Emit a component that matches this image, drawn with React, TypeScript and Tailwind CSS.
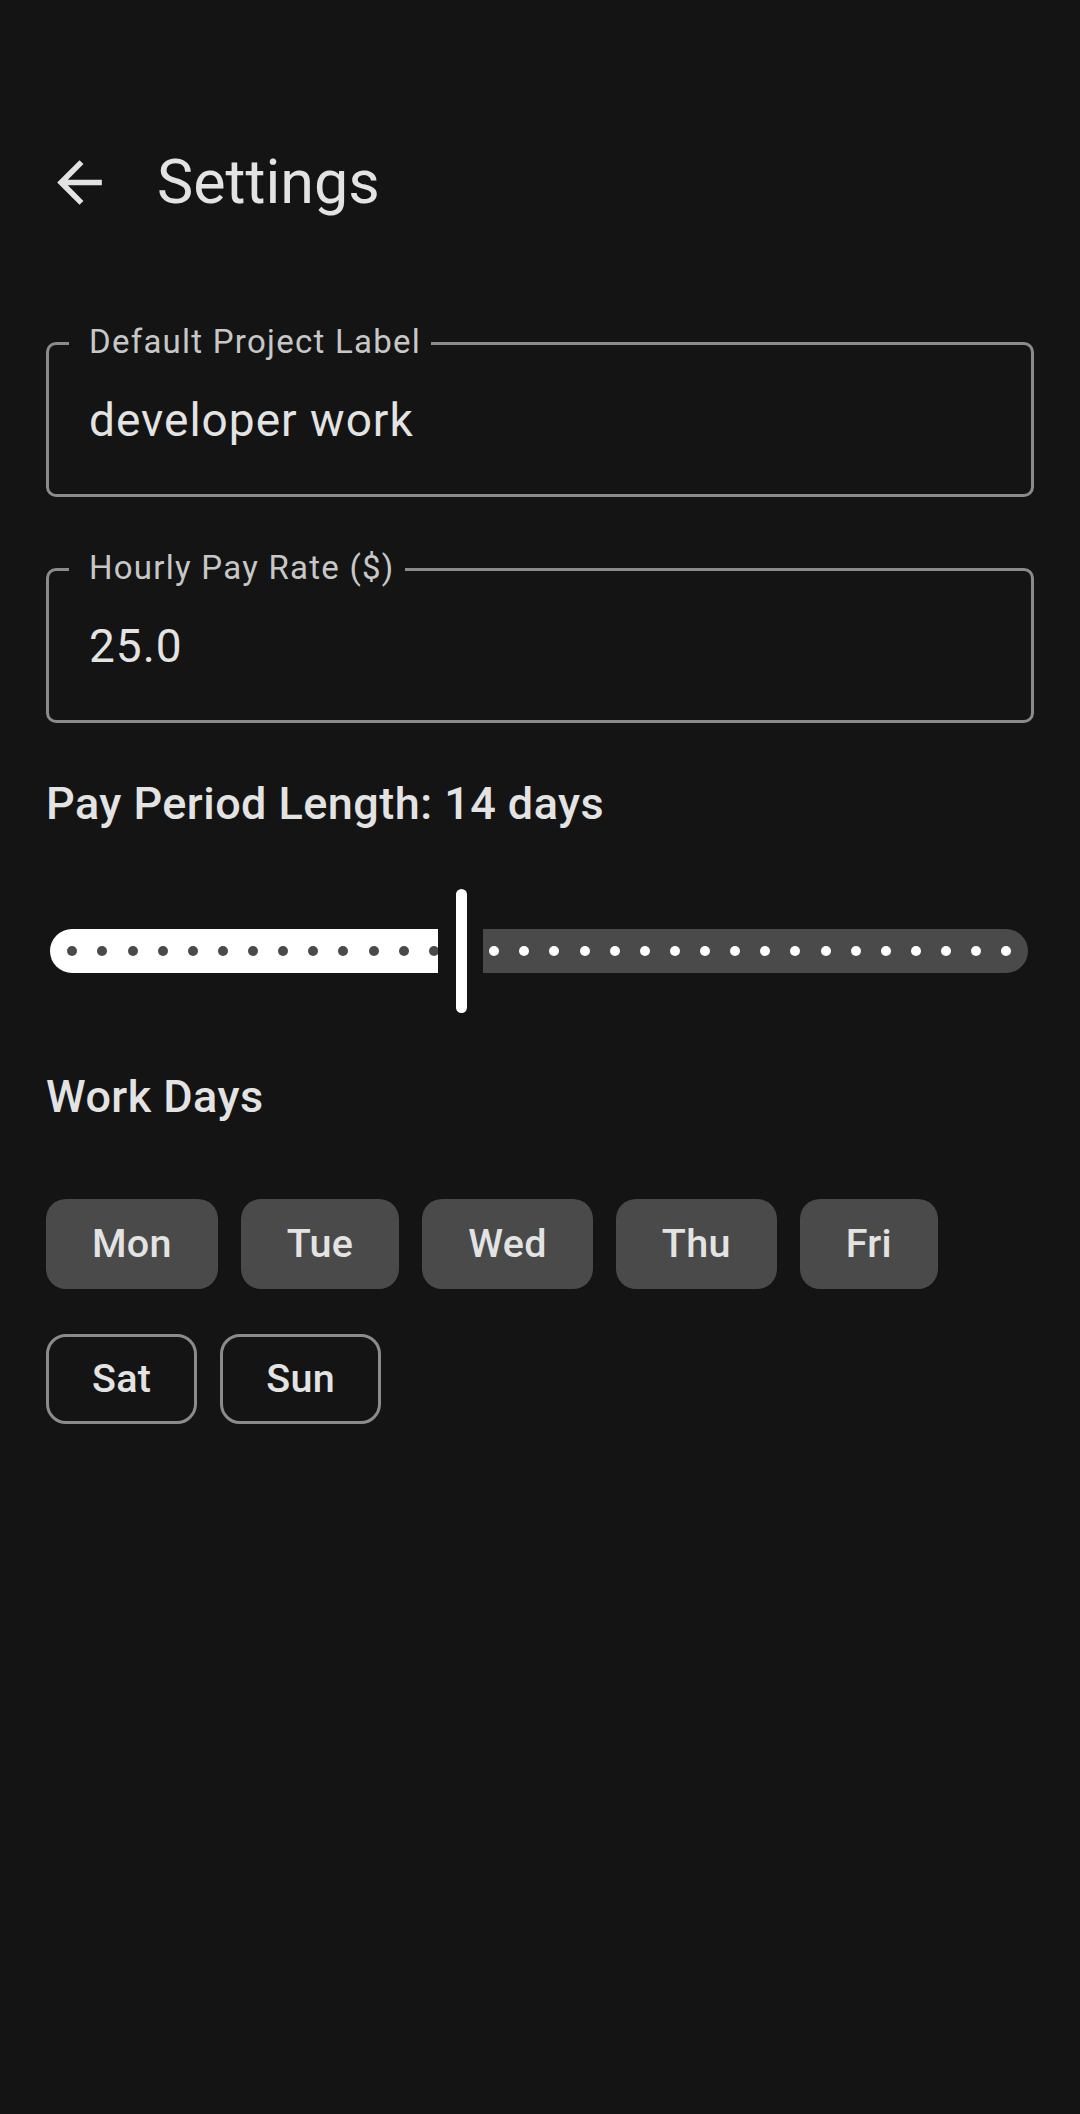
import React from "react";

const TRACK_LEFT = 50;
const DOT0 = 72.3;
const STEP = 30.13;
const DOT = 10;

function OutlinedField({ label, value }: { label: string; value: string }) {
  return (
    <div className="relative h-[155px] rounded-[10px] border-[3px] border-[#8b8b8b] flex items-center">
      <span className="absolute left-[20px] top-[-23px] h-[40px] leading-[40px] pl-[20px] pr-[10px] bg-[#141414] text-[33px] tracking-[1.25px] text-[#c7c7c7]">
        {label}
      </span>
      <span className="pl-[40px] text-[46px] leading-[56px] tracking-[1px] text-[#e3e3e3]">{value}</span>
    </div>
  );
}

function Slider() {
  const activeDots = Array.from({ length: 13 }, (_, k) => DOT0 + STEP * k - TRACK_LEFT - DOT / 2);
  const inactiveStart = 483;
  const inactiveDots = Array.from({ length: 18 }, (_, i) => DOT0 + STEP * (i + 14) - inactiveStart - DOT / 2);
  return (
    <div className="ml-[50px] w-[978px] h-[124px] flex items-center">
      <div className="relative w-[388px] h-[44px] bg-white rounded-l-full rounded-r-[3px] overflow-hidden">
        {activeDots.map((x, i) => (
          <span
            key={i}
            className="absolute top-[17px] w-[10px] h-[10px] rounded-full bg-[#4a4a4a]"
            style={{ left: x }}
          />
        ))}
      </div>
      <div className="ml-[18px] w-[11px] h-[124px] rounded-full bg-white" />
      <div className="relative ml-[16px] flex-1 h-[44px] bg-[#4a4a4a] rounded-r-full rounded-l-[3px] overflow-hidden">
        {inactiveDots.map((x, i) => (
          <span
            key={i}
            className="absolute top-[17px] w-[10px] h-[10px] rounded-full bg-white"
            style={{ left: x }}
          />
        ))}
      </div>
    </div>
  );
}

function Chip({ label, selected }: { label: string; selected: boolean }) {
  return (
    <div
      className={
        selected
          ? "h-[90px] px-[46px] rounded-[20px] bg-[#4a4a4a] flex items-center text-[39.5px] font-medium tracking-[0.3px] text-[#e3e3e3]"
          : "h-[90px] px-[43px] rounded-[20px] border-[3px] border-[#8b8b8b] flex items-center text-[39.5px] font-medium tracking-[0.3px] text-[#e3e3e3]"
      }
    >
      {label}
    </div>
  );
}

export default function App() {
  const days: [string, boolean][] = [
    ["Mon", true],
    ["Tue", true],
    ["Wed", true],
    ["Thu", true],
    ["Fri", true],
    ["Sat", false],
    ["Sun", false],
  ];
  return (
    <div
      className="w-[1080px] min-h-[2114px] bg-[#141414] text-[#e3e3e3]"
      style={{ fontFamily: "Roboto, 'Noto Sans', sans-serif" }}
    >
      <div className="pt-[126px] pl-[46px] h-[238px]">
        <div className="h-[112px] flex items-center gap-[44px]">
          <svg width="67" height="67" viewBox="0 0 24 24" fill="#e3e3e3">
            <path d="M20 11H7.83l5.59-5.59L12 4l-8 8 8 8 1.41-1.41L7.83 13H20v-2z" />
          </svg>
          <span className="text-[61px] leading-[72px] text-[#e3e3e3]">Settings</span>
        </div>
      </div>

      <div className="px-[46px]">
        <div className="mt-[104px]">
          <OutlinedField label="Default Project Label" value="developer work" />
        </div>
        <div className="mt-[71px]">
          <OutlinedField label="Hourly Pay Rate ($)" value="25.0" />
        </div>
        <div className="mt-[51px] h-[60px] leading-[60px] text-[45px] font-medium tracking-[0.45px] text-[#e3e3e3]">
          Pay Period Length: 14 days
        </div>
      </div>

      <div className="mt-[55px]">
        <Slider />
      </div>

      <div className="px-[46px]">
        <div className="mt-[54px] h-[60px] leading-[60px] text-[45px] font-medium tracking-[0.45px] text-[#e3e3e3]">
          Work Days
        </div>
        <div className="mt-[72px] flex flex-wrap gap-x-[23px] gap-y-[45px] w-[960px]">
          {days.map(([d, s]) => (
            <Chip key={d} label={d} selected={s} />
          ))}
        </div>
      </div>
    </div>
  );
}
